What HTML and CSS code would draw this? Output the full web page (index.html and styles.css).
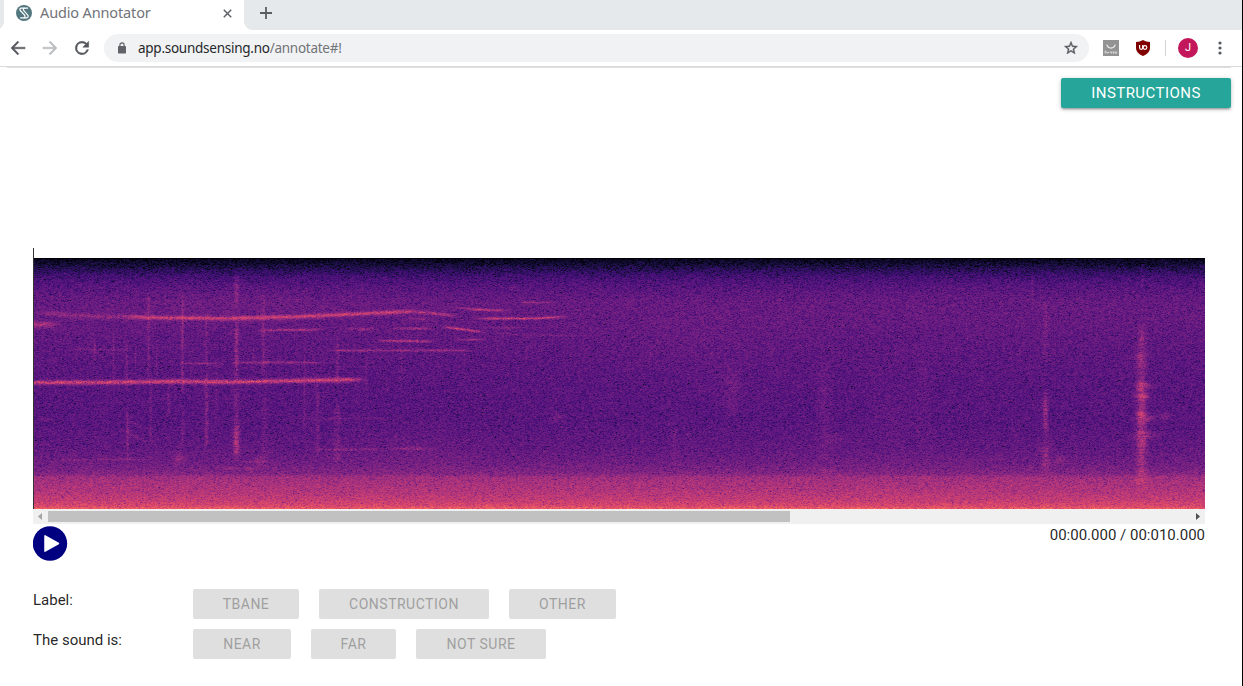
FILE: index.html
```html
<!DOCTYPE html>
<html lang="en">
<head>
<meta charset="utf-8">
<title>Audio Annotator</title>
<link rel="stylesheet" href="styles.css">
</head>
<body>
<div class="window">
  <header class="tabstrip">
    <div class="tab">
      <svg class="favicon" width="16" height="16" viewBox="0 0 16 16"><circle cx="8" cy="8" r="8" fill="#53777f"/><g fill="none" stroke="#fff" stroke-width="1.2"><path d="M8.6 3.2H5.2C3.8 3.2 3.5 4.7 4.3 5.5L8.6 10.1C9.6 11.4 8.8 12.8 7.5 12.8H4.2"/><path d="M12 3.2H8.800C7.300 3.200 6.900 4.600 7.800 5.600L11.800 10C12.700 11.300 12 12.800 10.800 12.800H7.600"/></g></svg>
      <span class="tab-title">Audio Annotator</span>
      <svg class="tab-close" width="9" height="9" viewBox="0 0 9 9"><path d="M.8.8l7.400 7.400M8.200.8L.8 8.200" stroke="#5f6368" stroke-width="1.500"/></svg>
    </div>
    <svg class="new-tab" width="12" height="12" viewBox="0 0 12 12"><path d="M6 0v12M0 6h12" stroke="#5a5d61" stroke-width="1.800"/></svg>
  </header>
  <div class="toolbar">
    <svg class="nav" width="20" height="20" viewBox="0 0 24 24" fill="#55585d" stroke="#55585d" stroke-width=".5"><path d="M20.500 11H7.300l5.800-5.800L11.700 3.700 3.500 12l8.200 8.300 1.400-1.500L7.300 13h13.200z"/></svg>
    <svg class="nav forward" width="20" height="20" viewBox="0 0 24 24" fill="#babcbe" stroke="#babcbe" stroke-width=".5"><path d="M3.500 11h13.200l-5.800-5.800 1.400-1.500L20.500 12l-8.200 8.300-1.400-1.500 5.800-5.800H3.500z"/></svg>
    <svg class="nav reload" width="20" height="20" viewBox="0 0 24 24" fill="#55585d" stroke="#55585d" stroke-width=".6"><path d="M17.650 6.350A7.960 7.960 0 0 0 12 4a8 8 0 1 0 7.730 10h-2.080A6 6 0 1 1 12 6c1.660 0 3.140.690 4.220 1.780L13 11h7V4z"/></svg>
    <div class="omnibox">
      <svg class="lock" width="8" height="12" viewBox="0 0 8 12"><path d="M1.900 5V3a2.100 2.100 0 0 1 4.200 0v2" fill="none" stroke="#5f6368" stroke-width="1.200"/><rect y="4" width="8" height="7.500" rx=".8" fill="#5f6368"/></svg>
      <span class="url"><b>app.soundsensing.no</b>/annotate#!</span>
      <svg class="star" width="16" height="16" viewBox="0 0 24 24" fill="#55585d" stroke="#55585d" stroke-width=".6"><path d="M22 9.240l-7.190-.620L12 2 9.190 8.630 2 9.240l5.460 4.730L5.820 21 12 17.270 18.180 21l-1.630-7.030zM12 15.400l-3.760 2.270 1-4.280-3.320-2.880 4.380-.380L12 6.100l1.710 4.040 4.380.380-3.320 2.880 1 4.280z"/></svg>
    </div>
    <svg class="ext-box" width="16" height="16" viewBox="0 0 16 16"><rect width="16" height="16" fill="#939393"/><path d="M3.800 4.600c1.500 4.600 6.900 4.600 8.400 0" fill="none" stroke="#eee" stroke-width="1.200"/><path d="M2.200 10.500v3M3 12h1.200v1.500M5 12.500h1.400M7 12h1.600v1.500M9.300 12h1.500v2M11.500 12h1.500v2M13.300 12h1" stroke="#ddd" stroke-width="1" fill="none"/></svg>
    <svg class="ext-shield" width="14" height="16" viewBox="0 0 14 16"><path d="M7 0c2 1.300 4.300 2 7 2v5.500C14 11.500 11.500 14 7 16 2.500 14 0 11.500 0 7.500V2c2.700 0 5-.7 7-2z" fill="#800000"/><path d="M3.600 5v2.800a1.500 1.500 0 0 0 3.100 0V5" fill="none" stroke="#fff" stroke-width="1.200"/><circle cx="9" cy="7.500" r="1.800" fill="none" stroke="#fff" stroke-width="1.200"/></svg>
    <i class="divider"></i>
    <span class="avatar">J</span>
    <svg class="menu" width="4" height="14" viewBox="0 0 4 14" fill="#55585d"><circle cx="2" cy="2" r="1.600"/><circle cx="2" cy="7" r="1.600"/><circle cx="2" cy="12" r="1.600"/></svg>
  </div>
  <main class="page">
    <div class="top"><button class="btn primary">INSTRUCTIONS</button></div>
    <section class="annotator">
      <div class="wave"><canvas id="spectrogram" width="1171" height="251"></canvas></div>
      <div class="scrollbar">
        <svg width="15" height="15" viewBox="0 0 15 15"><path d="M9 4v7L5 7.500z" fill="#a3a3a3"/></svg>
        <div class="track"><div class="thumb"></div></div>
        <svg width="15" height="15" viewBox="0 0 15 15"><path d="M6 4v7l4-3.500z" fill="#505050"/></svg>
      </div>
      <div class="player">
        <svg width="35" height="35" viewBox="0 0 35 35"><circle cx="17" cy="17.500" r="17.200" fill="#000080"/><path d="M12 9.800v15.400l13.500-7.700z" fill="#fff" stroke="#fff" stroke-width="1.500" stroke-linejoin="round"/></svg>
        <span class="time">00:00.000 / 00:010.000</span>
      </div>
      <div class="row labels"><span class="label">Label:</span><button class="btn">TBANE</button><button class="btn">CONSTRUCTION</button><button class="btn">OTHER</button></div>
      <div class="row distances"><span class="label">The sound is:</span><button class="btn">NEAR</button><button class="btn">FAR</button><button class="btn">NOT SURE</button></div>
    </section>
  </main>
</div>
<script src="spectrogram.js"></script>
</body>
</html>
```
FILE: styles.css
```css
* { box-sizing: border-box; }
body { margin: 0; font-family: Roboto, sans-serif; font-size: 15px; color: rgba(0,0,0,.87); background: #fff; }
svg { display: block; flex: none; }
.window { height: 686px; border-right: 1px solid #000; overflow: hidden; display: flex; flex-direction: column; }
.tabstrip { height: 30px; flex: none; background: #e5e9ec; display: flex; align-items: flex-start; padding-left: 4px; }
.tab { width: 240px; height: 30px; background: #fff; display: flex; align-items: center; padding: 0 12px 4px 12px; position: relative; }
.tab::before, .tab::after { content: ""; position: absolute; bottom: 0; width: 8px; height: 8px; }
.tab::before { left: -8px; background: radial-gradient(circle at 0 0, transparent 7.500px, #fff 8px); }
.tab::after { right: -8px; background: radial-gradient(circle at 100% 0, transparent 7.500px, #fff 8px); }
.tab-title { font: 14.500px/20px "Noto Sans", sans-serif; letter-spacing: -.14px; color: #717478; margin: 0 0 2px 8px; flex: 1; white-space: nowrap; }
.new-tab { margin: 7px 0 0 16px; }
.toolbar { height: 37px; flex: none; display: flex; align-items: center; padding: 0 20px 1px 8px; border-bottom: 1px solid #dadada; }
.forward { margin-left: 12px; }
.reload { margin-left: 12px; }
.omnibox { height: 28px; width: 985px; margin-left: 12px; border-radius: 14px; background: #f1f2f4; display: flex; align-items: center; padding: 0 10px 0 14px; }
.url { font: 13.500px/20px "Noto Sans", sans-serif; letter-spacing: -.26px; color: #717478; margin-left: 12px; flex: 1; }
.url b { font-weight: 400; color: #25272a; }
.ext-box { margin-left: 14px; }
.ext-shield { margin-left: 17px; }
.divider { width: 1px; height: 16px; background: #d0d2d4; margin-left: 15px; }
.avatar { width: 20px; height: 20px; margin-left: 12px; border-radius: 50%; background: #c2185b; color: #fff; font-size: 11px; line-height: 20px; text-align: center; }
.menu { margin-left: 20px; }
.page { flex: 1; margin: 0 11px 0 7px; border-top: 1px solid #dedede; }
.top { height: 180px; padding-top: 10px; display: flex; justify-content: flex-end; align-items: flex-start; }
.btn { height: 30px; border: 0; border-radius: 2px; padding: 0; background: #dfdfdf; color: #9f9f9f; font: 14px/30px Roboto, sans-serif; letter-spacing: .5px; white-space: nowrap; }
.primary { width: 170px; font-size: 15px; letter-spacing: .45px; background: #26a69a; color: #fff; box-shadow: 0 2px 2px rgba(0,0,0,.14), 0 3px 1px -2px rgba(0,0,0,.12), 0 1px 5px rgba(0,0,0,.2); }
.annotator { padding: 0 26px; }
.wave { height: 261px; border-left: 1px solid #333; padding-top: 10px; }
.wave canvas { display: block; width: 1171px; height: 251px; }
.scrollbar { height: 15px; background: #f0f0f0; display: flex; }
.track { flex: 1; padding: 2px 0; }
.thumb { width: 742px; height: 11px; background: #c1c1c1; }
.player { height: 65px; display: flex; justify-content: space-between; padding-top: 2px; }
.time { line-height: 18px; }
.row { display: grid; column-gap: 20px; height: 30px; margin-bottom: 10px; }
.labels { grid-template-columns: 140px 106px 170px 107px; }
.distances { grid-template-columns: 140px 98px 85px 130px; }
.label { line-height: 22px; }
```
FILE: spectrogram.js
```javascript
const canvas = document.getElementById('spectrogram');
const ctx = canvas.getContext('2d');
const W = canvas.width, H = canvas.height;
let seed = 12345;
function rand() {
  seed = (seed + 0x6D2B79F5) | 0;
  let t = Math.imul(seed ^ (seed >>> 15), 1 | seed);
  t = (t + Math.imul(t ^ (t >>> 7), 61 | t)) ^ t;
  return (((t ^ (t >>> 14)) >>> 0) + 1) / 4294967297;
}
function lerp(stops, x) {
  if (x <= stops[0][0]) return stops[0][1];
  for (let i = 1; i < stops.length; i++) {
    if (x <= stops[i][0]) {
      const [a, p] = stops[i - 1], [b, q] = stops[i];
      return p + (q - p) * (x - a) / (b - a);
    }
  }
  return stops[stops.length - 1][1];
}
// Magma colour map, sampled
const magma = [[0,0,0,4],[.06,10,8,34],[.125,28,16,68],[.2,59,15,112],[.25,81,18,124],[.3,100,26,128],[.375,129,37,129],[.4,140,41,129],[.5,183,55,121],[.6,222,73,104],[.7,247,112,92],[.8,254,159,109],[1,252,253,191]];
const channels = [1, 2, 3].map(c => magma.map(m => [m[0], m[c]]));
// Background level per row
const floor = [[0,0],[1,.05],[6,.095],[12,.16],[18,.215],[27,.26],[42,.3],[60,.3],[85,.285],[120,.272],[165,.268],[190,.29],[205,.325],[215,.37],[219,.44],[232,.48],[242,.53],[247,.575],[250,.64]];
const field = new Float32Array(W * H);
for (let y = 0; y < H; y++) {
  const base = lerp(floor, y);
  for (let x = 0; x < W; x++) field[y * W + x] = base;
}
function add(x, y, v) {
  x = Math.round(x); y = Math.round(y);
  if (x >= 0 && x < W && y >= 0 && y < H) {
    const i = y * W + x;
    field[i] += v * Math.max(.15, 1 - Math.max(0, field[i] - .33) * 3);
  }
}
// Horizontal tone along a polyline
function tone(points, level, thick) {
  const a = points[0][0], b = points[points.length - 1][0];
  for (let x = a; x <= b; x++) {
    const c = lerp(points, x);
    const fade = Math.min(1, (x - a + 1) / 16, (b - x + 1) / 16);
    for (let y = Math.floor(c - 5); y <= c + 5; y++) {
      add(x, y, level * fade * (.7 + rand() * .6) * Math.exp(-((y - c) ** 2) / (thick * thick)));
    }
  }
}
// Vertical broadband burst
function burst(x, top, bottom, level, width) {
  for (let y = top; y <= bottom; y++) {
    const edge = Math.min(1, (y - top + 1) / 12, (bottom - y + 1) / 12);
    const k = level * .8 * edge * (.6 + rand() * .8);
    for (let d = -9; d <= 9; d++) add(x + d, y, k * Math.exp(-d * d / (width * width)));
  }
}
// Soft patch
function glow(x, y, rx, ry, level) {
  for (let j = -2 * ry; j <= 2 * ry; j++)
    for (let i = -2 * rx; i <= 2 * rx; i++)
      add(x + i, y + j, level * Math.exp(-i * i / (rx * rx) - j * j / (ry * ry)));
}
tone([[0,54],[40,57],[110,59],[190,60],[270,58],[330,55],[378,53]], .1, 2.400);
tone([[90,58],[110,59],[190,60],[270,58],[330,55],[378,53],[400,55],[426,58]], .17, 1.700);
tone([[-16,124],[60,124],[140,123],[200,123.500],[270,122],[332,121]], .27, 2.200);
tone([[-16,66],[26,66]], .17, 3);
tone([[440,60],[500,60],[535,58]], .22, 1.200);
[[222,290,72,71,.16],[305,345,70,71,.13],[352,402,70,70,.13],[406,452,68,74,.24],[340,401,82,83,.2],
 [290,440,92,92,.13],[145,190,105,105,.13],[195,292,104,104,.13],[430,478,51,52,.18],[415,455,49,51,.1],
 [480,524,44,44,.12],[370,400,60,61,.12],[445,490,69,69,.08],[420,455,81,81,.12],[470,486,30,30,.1],
 [3,20,161,161,.14],[186,206,210,210,.16],[206,226,210,210,.1],[206,226,203,204,.1],[280,350,191,191,.08],
 [350,400,190,190,.1],[84,118,170,186,.08],[90,110,158,172,.12],[30,100,91,91,.06],[460,560,75,78,.05],
 [85,100,173,173,.09],[20,120,201,201,.05],[255,360,160,160,.05]
].forEach(([a, b, p, q, l]) => tone([[a, p], [b, q]], l, 1.200));
[[202,12,55,.1,2.400],[202,60,125,.16,2],[202,126,170,.08,2.500],[202,160,203,.19,3.200],[172,55,110,.08,1.500],[172,110,192,.12,1.800],
 [148,35,135,.12,1.300],[148,145,190,.07,1.300],[114,30,125,.09,1.300],[116,125,190,.06,1.500],[92,80,135,.08,1.200],
 [93,145,205,.09,1.300],[79,65,130,.06,1],[60,75,108,.09,1],[101,85,110,.07,1.200],[122,75,125,.06,1],[134,120,160,.06,1.500],
 [182,100,170,.04,2],[229,35,120,.08,1.800],[219,80,110,.06,1],[230,130,210,.05,2.500],[233,85,115,.06,1],
 [270,80,170,.06,1.200],[283,115,200,.08,1.800],[303,75,130,.09,1.500],[303,140,210,.06,3],[332,90,145,.04,1.500],
 [367,75,130,.04,1.500],[430,80,110,.05,1],[492,85,105,.07,1],[553,86,104,.07,1.200],[616,86,104,.07,1.200],
 [677,86,104,.06,1.200],[738,86,104,.06,1],[799,86,104,.05,1],[861,84,104,.06,1],[922,86,104,.05,1],[985,84,104,.05,1],[1047,82,104,.05,1],
 [1011,38,105,.06,3],[1011,130,180,.15,2.500],[1011,178,218,.1,4],[998,10,45,.05,1],
 [1108,0,35,.06,2],[1107,65,100,.12,4],[1107,90,160,.14,4.500],[1107,120,150,.09,5],[1107,145,195,.2,5],[1107,183,235,.14,5],
 [698,110,160,.04,6],[790,100,210,.04,7],[890,85,185,.02,8],[640,150,210,.03,4]
].forEach(b => burst(...b));
[[1110,127,9,3,.12],[1108,138,7,3,.14],[1112,160,10,4,.12],[1112,177,10,4,.12],[1107,99,7,3,.08],[1131,158,5,3,.08],
 [1025,202,5,4,.07],[523,160,6,5,.06],[800,180,7,5,.05],[145,200,5,6,.08],[225,202,5,5,.08],[790,213,6,4,.05],
 [695,125,20,25,.02],[860,160,25,35,.02],[380,190,55,24,.02],[660,85,70,30,.015],[200,45,130,18,.015]
].forEach(g => glow(...g));
const image = ctx.createImageData(W, H);
for (let y = 0; y < H; y++) {
  let last = 0;
  for (let x = 0; x < W; x++) {
    const n = Math.log(-Math.log(rand()) - Math.log(rand())) - .42;
    const noise = last * .25 + n * .9;
    last = n;
    const v = y === 0 ? 0 : Math.max(0, field[y * W + x] + noise * .052);
    const i = (y * W + x) * 4;
    for (let c = 0; c < 3; c++) image.data[i + c] = lerp(channels[c], v);
    image.data[i + 3] = 255;
  }
}
ctx.putImageData(image, 0, 0);
```
